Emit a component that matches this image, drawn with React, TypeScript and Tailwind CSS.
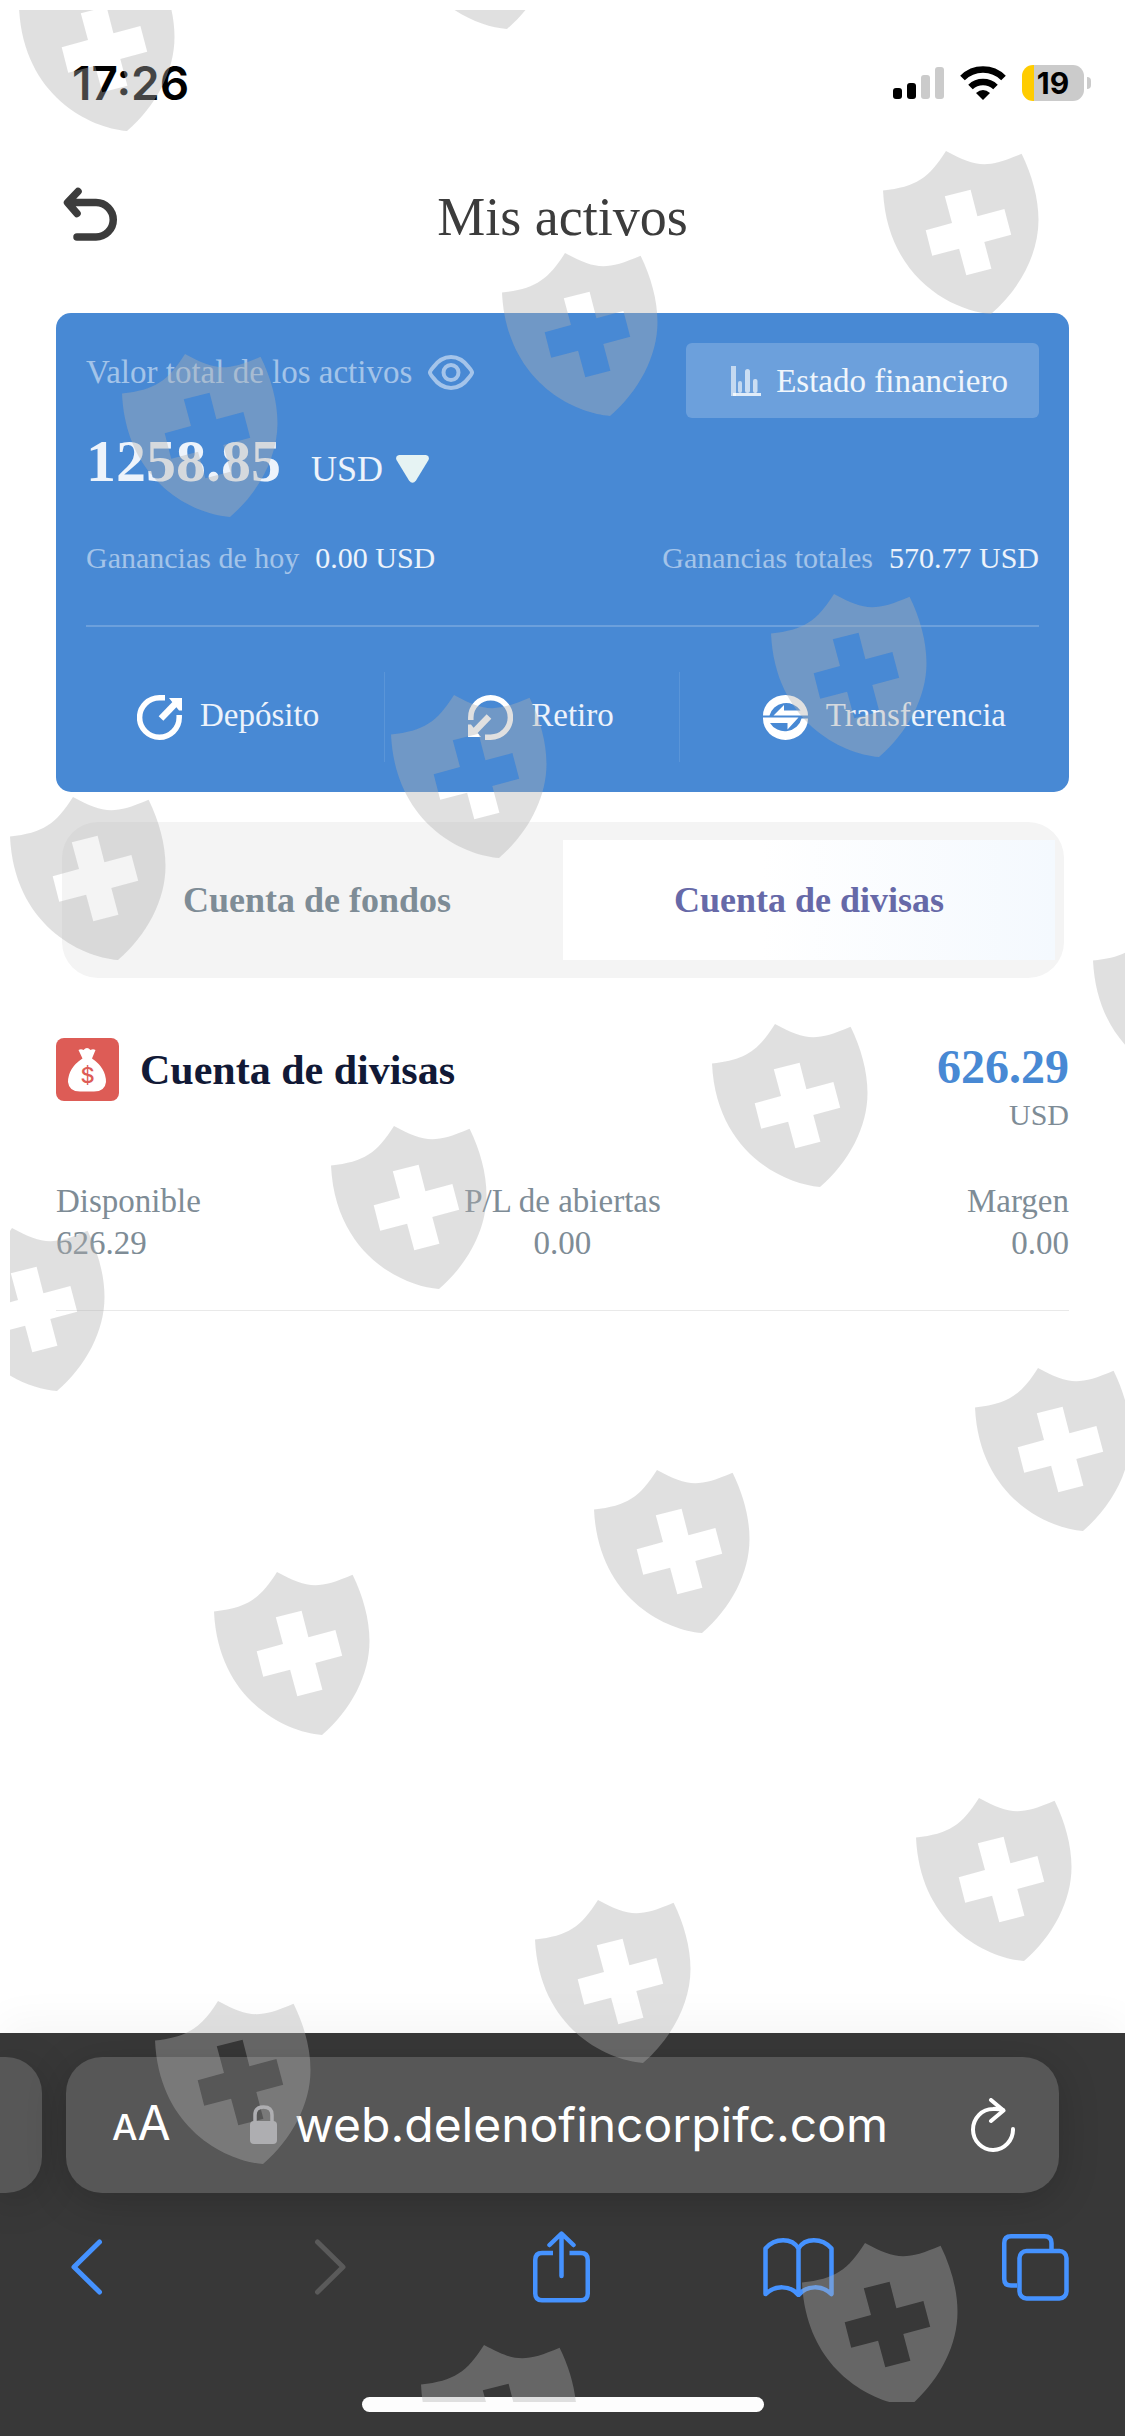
import { useState } from "react";

const SERIF = "font-['Liberation_Serif',serif]";
const SANS = "font-['Inter',sans-serif]";

const watermarks = [
  [19, -32], [399, -134],
  [883, 151], [502, 253], [122, 354],
  [771, 594], [391, 695], [10, 797],
  [1093, 921], [712, 1024], [331, 1126], [-51, 1228],
  [975, 1368], [594, 1470], [214, 1572],
  [916, 1798], [535, 1900], [155, 2001],
  [802, 2243], [421, 2345],
];

function Shield({ x, y }: { x: number; y: number }) {
  return (
    <svg
      className="absolute h-[164px] w-[156px] text-[#b0b0b0]/39"
      style={{ left: x - 10, top: y - 10 }}
      viewBox="0 0 156 164"
      fill="currentColor"
      fillRule="evenodd"
    >
      <path d="M0 39.5C33 36 46 27 63 0C93 16 103 18 138.6 2.7C149 24 155.5 47 155.5 69C155.5 103 137 138 108 163C70 160 4 127 0 39.5ZM61.8 45.3L69 72L42.7 79.3L49.2 104.7L76.1 97.7L83.3 124.3L108.4 117.7L101.3 91L128.2 83.7L121.4 58L94.4 65.3L87.6 38.7Z" />
    </svg>
  );
}

function Watermark() {
  return (
    <div aria-hidden="true" className="pointer-events-none absolute top-[10px] right-0 bottom-[34px] left-[10px] overflow-hidden">
      {watermarks.map(([x, y]) => (
        <Shield key={`${x}-${y}`} x={x} y={y} />
      ))}
    </div>
  );
}

function StatusBar() {
  return (
    <div className={`${SANS} flex h-[135px] items-center justify-between pt-[30px] pr-[34px] pl-[72px] text-black`}>
      <time className="text-[46px] leading-[48px] font-semibold">17:26</time>
      <div className="flex items-center gap-4">
        <svg className="h-[33px] w-[51px]" viewBox="0 0 51 33">
          <rect x="0" y="22" width="9" height="11" rx="3" />
          <rect x="14" y="17" width="9" height="16" rx="3" />
          <rect x="28" y="9" width="9" height="24" rx="3" fill="#cbcbcb" />
          <rect x="42" y="1" width="9" height="32" rx="3" fill="#cbcbcb" />
        </svg>
        <svg className="h-[34px] w-[46px]" viewBox="0 0 46 34" fill="none" stroke="#000">
          <path d="M2.5 12A29 29 0 0 1 43.5 12" strokeWidth="6.5" />
          <path d="M10.5 21A18 18 0 0 1 35.5 21" strokeWidth="6.5" />
          <path d="M23 34L16 27Q23 21 30 27Z" fill="#000" stroke="none" />
        </svg>
        <div className="flex items-center gap-[3px]">
          <div className="flex h-9 w-[62px] items-center justify-center rounded-[11px] bg-[linear-gradient(to_right,#ffcc00_12px,#cbcbcb_12px)] text-[30px] leading-9 font-bold">
            19
          </div>
          <div className="h-[12px] w-1 rounded-r-full bg-[#cbcbcb]" />
        </div>
      </div>
    </div>
  );
}

function EyeIcon() {
  return (
    <svg className="h-[35px] w-[46px]" viewBox="0 0 46 35" fill="none" stroke="currentColor" strokeWidth="4">
      <path d="M2 17.5Q1.5 16.5 5 12.5Q12.5 2 23 2Q33.5 2 41 12.5Q44.5 16.5 44 17.5Q44.5 18.5 41 22.5Q33.5 33 23 33Q12.5 33 5 22.5Q1.5 18.5 2 17.5Z" />
      <circle cx="23" cy="17.5" r="7.5" />
    </svg>
  );
}

function ChartIcon() {
  return (
    <svg className="h-[30px] w-[30px]" viewBox="0 0 30 30" fill="#fff">
      <rect x="0" y="0" width="5" height="30" opacity=".6" />
      <rect x="2" y="27" width="28" height="3" opacity=".8" />
      <rect x="7" y="15" width="4" height="12" rx="2" opacity=".6" />
      <rect x="14" y="3" width="5" height="24" rx="2.5" opacity=".65" />
      <rect x="22" y="13" width="4.5" height="14" rx="2" opacity=".65" />
    </svg>
  );
}

function ArrowCircleIcon({ flipped = false }: { flipped?: boolean }) {
  return (
    <svg className={flipped ? "h-[45px] w-[45px] rotate-180" : "h-[45px] w-[45px]"} viewBox="0 0 45 45" fill="none" stroke="#fff">
      <path d="M28 2.8H22.5A19.8 19.7 0 1 0 42.2 22.5V20" strokeWidth="5.5" />
      <path d="M24 23.5L38 9" strokeWidth="6.5" />
      <path d="M32 3H45V15.5H42Z" fill="#fff" stroke="none" />
    </svg>
  );
}

function TransferIcon() {
  return (
    <svg className="h-[45px] w-[45px]" viewBox="0 0 45 45" fill="#fff">
      <path d="M0 20.5A22.5 20.5 0 0 1 45 20.5H10.5L21 10V15.5H37.5A17 16 0 0 0 6.5 20.5Z" />
      <path d="M45 23.5A22.5 21.5 0 0 1 0 23.5V22.5H35.5L24.5 34.5V28H7A17 16 0 0 0 38.5 23.5Z" />
    </svg>
  );
}

function MoneyBagIcon() {
  return (
    <svg className="h-[63px] w-[63px] rounded-lg bg-[#dd5c56]" viewBox="0 0 63 63">
      <path
        d="M22.5 12Q25 10.5 27.5 12Q31 8 34.5 12Q37 10.5 39.5 12L36 20.5Q50 30 50 44Q49 53.5 38 53.5H24Q13 53.5 12 44Q12 30 26.5 20.5Z"
        fill="#fff"
      />
      <text x="31.5" y="45" textAnchor="middle" fontFamily="Inter, sans-serif" fontSize="22" fontWeight="500" fill="#dd5c56">
        $
      </text>
    </svg>
  );
}

function AssetsCard() {
  return (
    <section className="mx-14 mt-[14px] rounded-[15px] bg-[#4889d4] p-[30px] text-white/90">
      <div className="flex items-start justify-between">
        <div className="pt-2">
          <div className="flex items-center gap-4 text-[33px] leading-[42px] text-white/50">
            <span>Valor total de los activos</span>
            <button type="button" aria-label="Mostrar u ocultar valor">
              <EyeIcon />
            </button>
          </div>
          <div className="mt-[35px] flex items-baseline gap-[30px] leading-[66px]">
            <strong className="text-[60px]">1258.85</strong>
            <label className="flex items-center gap-3 text-[36px]">
              <select aria-label="Moneda" className="appearance-none bg-transparent">
                <option>USD</option>
              </select>
              <svg className="h-[28px] w-[33px]" viewBox="0 0 33 28" fill="#e6f3f3">
                <path d="M3 0H30Q34 1 32.5 5L20 25.5Q16.5 30 13 25.5L.5 5Q-1 1 3 0Z" />
              </svg>
            </label>
          </div>
        </div>
        <button type="button" className="flex h-[75px] items-center gap-[15px] rounded-md bg-white/20 pr-[31px] pl-[45px] text-[33px] leading-[42px]">
          <ChartIcon />
          Estado financiero
        </button>
      </div>
      <dl className="mt-[38px] flex justify-between text-[30px] leading-9">
        <div className="flex gap-4">
          <dt className="text-white/50">Ganancias de hoy</dt>
          <dd>0.00 USD</dd>
        </div>
        <div className="flex gap-4">
          <dt className="text-white/50">Ganancias totales</dt>
          <dd>570.77 USD</dd>
        </div>
      </dl>
      <nav className="mt-[49px] flex border-t-2 border-white/20 pt-[45px] text-[33px] leading-[42px]">
        <button type="button" className="flex h-[90px] flex-auto items-center gap-[18px] border-r border-white/10 pl-[51px]">
          <ArrowCircleIcon />
          <span className="pr-16 pb-1">Depósito</span>
        </button>
        <button type="button" className="flex h-[90px] flex-auto items-center gap-[18px] border-r border-white/10 pl-[83px]">
          <ArrowCircleIcon flipped />
          <span className="pr-16 pb-1">Retiro</span>
        </button>
        <button type="button" className="flex h-[90px] flex-auto items-center gap-[18px] pl-[83px]">
          <TransferIcon />
          <span className="pr-8 pb-1">Transferencia</span>
        </button>
      </nav>
    </section>
  );
}

function AccountTabs() {
  const [active, setActive] = useState(1);
  return (
    <div role="tablist" className="mt-[30px] mr-[61px] ml-[62px] grid grid-cols-2 rounded-[36px] bg-[#f4f4f4] px-[9px] py-[18px]">
      {["Cuenta de fondos", "Cuenta de divisas"].map((name, i) => (
        <button
          key={name}
          type="button"
          role="tab"
          aria-selected={active === i}
          onClick={() => setActive(i)}
          className={
            active === i
              ? "h-[120px] bg-linear-to-r from-white from-40% to-[#f4f9fe] text-[36px] leading-[42px] font-bold text-[#6669a8]"
              : "h-[120px] text-[36px] leading-[42px] font-bold text-[#7e8c96]"
          }
        >
          {name}
        </button>
      ))}
    </div>
  );
}

function Account() {
  return (
    <section className="mx-14 border-b border-[#e9e9e9] pt-[60px] pb-[46px]">
      <div className="flex items-start justify-between">
        <div className="flex items-center gap-[21px]">
          <MoneyBagIcon />
          <h2 className="text-[42px] leading-[48px] font-bold text-[#111936]">Cuenta de divisas</h2>
        </div>
        <div className="pt-[2px] text-right">
          <div className="text-[48px] leading-[54px] font-bold text-[#4889d4]">626.29</div>
          <div className="mt-[3px] text-[30px] leading-9 text-[#7e8c96]">USD</div>
        </div>
      </div>
      <dl className="mt-[47px] grid grid-cols-3 text-[33px] leading-[42px] text-[#7e8c96]">
        <div>
          <dt>Disponible</dt>
          <dd>626.29</dd>
        </div>
        <div className="text-center">
          <dt>P/L de abiertas</dt>
          <dd>0.00</dd>
        </div>
        <div className="text-right">
          <dt>Margen</dt>
          <dd>0.00</dd>
        </div>
      </dl>
    </section>
  );
}

function BrowserBar() {
  const tool = "flex h-[72px] w-[72px] items-center justify-center";
  return (
    <footer className={`${SANS} overflow-hidden bg-[#383838] pt-6 pb-6 text-white shadow-[0_-12px_40px_rgba(0,0,0,0.04)]`}>
      <div className="flex gap-6 pr-[66px]">
        <div className="h-[136px] w-[42px] rounded-r-[36px] bg-[#575757] shadow-[0_8px_40px_rgba(0,0,0,0.18)]" />
        <div className="flex h-[136px] flex-1 items-center justify-between rounded-[36px] bg-[#575757] pr-11 pl-[46px] shadow-[0_8px_40px_rgba(0,0,0,0.18)]">
          <button type="button" aria-label="Tamaño del texto" className="flex items-baseline leading-[60px]">
            <span className="text-[36px] font-medium">A</span>
            <span className="text-[48px]">A</span>
          </button>
          <button type="button" className="flex items-center gap-[18px] pr-1 text-[48px] leading-[60px]">
            <svg className="h-[40px] w-[27px]" viewBox="0 0 27 40">
              <rect x="0" y="16" width="27" height="23" rx="4" fill="#aeaeb2" />
              <path d="M5 17V10Q5 2 13.5 2Q22 2 22 10V17" fill="none" stroke="#aeaeb2" strokeWidth="3.5" />
            </svg>
            web.delenofincorpifc.com
          </button>
          <button type="button" aria-label="Recargar">
            <svg className="h-[54px] w-11" viewBox="0 0 44 54" fill="none" stroke="currentColor" strokeWidth="4" strokeLinecap="round" strokeLinejoin="round">
              <path d="M42 31A20 20.5 0 1 1 22 11Q27 10.5 32 12" />
              <path d="M20 2L32.5 12.5L20 23" />
            </svg>
          </button>
        </div>
      </div>
      <nav className="flex h-[148px] items-center justify-between pr-[54px] pl-[51px] text-[#4592ff]">
        <button type="button" aria-label="Atrás" className={tool}>
          <svg className="h-[56px] w-[32px]" viewBox="0 0 32 56" fill="none" stroke="currentColor" strokeWidth="5" strokeLinecap="round" strokeLinejoin="round">
            <path d="M28.5 3L3 28L28.5 53" />
          </svg>
        </button>
        <button type="button" aria-label="Adelante" disabled className={`${tool} text-[#5a5a5a]`}>
          <svg className="h-[56px] w-[44px]" viewBox="0 0 44 56" fill="none" stroke="currentColor" strokeWidth="5" strokeLinecap="round" strokeLinejoin="round">
            <path d="M15.5 3L41 28L15.5 53" />
          </svg>
        </button>
        <button type="button" aria-label="Compartir" className={tool}>
          <svg className="h-[72px] w-[57px]" viewBox="0 0 57 72" fill="none" stroke="currentColor" strokeWidth="4.5" strokeLinejoin="round">
            <path d="M20 22H9Q2.25 22 2.25 29V62.5Q2.25 69.2 9 69.2H48Q54.75 69.2 54.75 62.5V29Q54.75 22 48 22H36.5" />
            <path d="M28.5 45V3M16.5 14L28.5 2.5L40.5 14" strokeLinecap="round" />
          </svg>
        </button>
        <button type="button" aria-label="Marcadores" className={tool}>
          <svg className="h-[59px] w-[71px]" viewBox="0 0 71 59" fill="none" stroke="currentColor" strokeWidth="4.5" strokeLinejoin="round">
            <path d="M35.5 10.5C29 -.5 12 -.5 2.5 10.5V56C12 47 27 47 35.5 57C44 47 59 47 68.5 56V10.5C59 -.5 42 -.5 35.5 10.5V56" />
          </svg>
        </button>
        <button type="button" aria-label="Pestañas" className={tool}>
          <svg className="h-[67px] w-[67px]" viewBox="0 0 67 67" fill="none" stroke="currentColor" strokeWidth="4.5">
            <path d="M15 51.5H9Q2.25 51.5 2.25 45V9Q2.25 2.25 9 2.25H42.5Q49.5 2.25 49.5 9V15" />
            <rect x="17.5" y="17" width="47" height="47.5" rx="7" />
          </svg>
        </button>
      </nav>
      <div className="mx-auto mt-14 h-[15px] w-[402px] rounded-full bg-[#fdfdfd]" />
    </footer>
  );
}

export default function App() {
  return (
    <div className={`${SERIF} relative flex min-h-screen flex-col overflow-hidden bg-white`}>
      <StatusBar />
      <header className="grid h-[164px] grid-cols-[54px_1fr_54px] items-center px-[63px] text-[#3c3c3c]">
        <button type="button" aria-label="Volver">
          <svg className="h-[60px] w-[54px]" viewBox="0 0 54 60" fill="none" stroke="currentColor" strokeWidth="7.5" strokeLinecap="round" strokeLinejoin="round">
            <path d="M5 15.5H33A17.25 17.25 0 0 1 33 50H14M15 4.5L4.5 15.5L14 26.5" />
          </svg>
        </button>
        <h1 className="text-center text-[54px] leading-[60px]">Mis activos</h1>
      </header>
      <main className="flex-1">
        <AssetsCard />
        <AccountTabs />
        <Account />
      </main>
      <BrowserBar />
      <Watermark />
    </div>
  );
}
